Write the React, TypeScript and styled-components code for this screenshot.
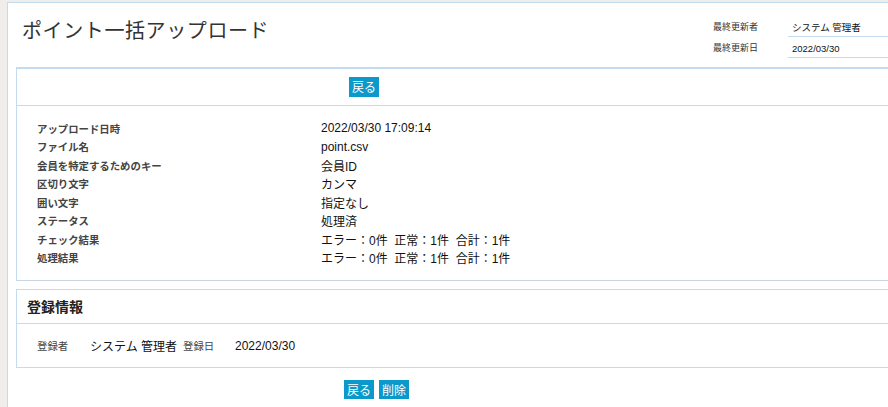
import React from 'react';
import styled, { createGlobalStyle } from 'styled-components';

const GlobalStyle = createGlobalStyle`
  html, body {
    margin: 0;
    padding: 0;
    background: #efeeea;
    overflow: hidden;
  }
  body {
    font-family: "Noto Sans CJK JP", "Liberation Sans", sans-serif;
    color: #333;
  }
`;

const jp = `"Noto Sans CJK JP", sans-serif`;
const latin = `"Liberation Sans", "Noto Sans CJK JP", sans-serif`;
const borderBlue = '#c3dbf1';

const Page = styled.div`
  padding: 2px 0 0 7px;
`;

const Panel = styled.div`
  width: 881px;
  min-height: 420px;
  background: #fff;
  border: 1px solid ${borderBlue};
  border-right: none;
  padding: 0 0 0 8px;
  box-sizing: border-box;
`;

const Header = styled.div`
  display: grid;
  grid-template-columns: 697px 1fr;
  height: 64px;
`;

const Title = styled.h1`
  margin: 0;
  padding: 13px 0 0 6px;
  font-family: ${jp};
  font-size: 20px;
  font-weight: 400;
  letter-spacing: 0.6px;
  color: #333;
  line-height: 28px;
`;

const Meta = styled.div`
  display: grid;
  grid-template-columns: 75px 1fr;
  grid-auto-rows: 21px;
  margin-top: 13px;
`;

const MetaLabel = styled.div`
  font-family: ${jp};
  font-size: 9px;
  color: #333;
  padding-top: 5px;
  line-height: 12px;
`;

const MetaValue = styled.div`
  font-family: ${latin};
  font-size: 9.5px;
  color: #111;
  padding: 6px 0 0 4px;
  line-height: 12px;
  border-bottom: 1px solid ${borderBlue};
  box-sizing: border-box;
`;

const Box = styled.section<{ $thickTop?: boolean; $bottomColor?: string }>`
  border: 1px solid ${borderBlue};
  border-top-width: ${(p) => (p.$thickTop ? 2 : 1)}px;
  border-bottom-color: ${(p) => p.$bottomColor || borderBlue};
  border-right: none;
  & + & {
    margin-top: 8px;
  }
`;

const Toolbar = styled.div<{ $indent: number }>`
  display: flex;
  gap: 5px;
  height: 37px;
  box-sizing: border-box;
  padding: 8px 0 0 ${(p) => p.$indent}px;
  border-bottom: 1px solid ${borderBlue};
`;

const Footer = styled.div<{ $indent: number }>`
  display: flex;
  gap: 5px;
  padding: 12px 0 0 ${(p) => p.$indent}px;
`;

const Button = styled.button<{ $h: number }>`
  height: ${(p) => p.$h}px;
  padding: 0 3px;
  border: none;
  border-radius: 0;
  background: #0b98ca;
  color: #fff;
  font-family: ${jp};
  font-size: 12px;
  line-height: ${(p) => p.$h}px;
  cursor: pointer;
`;

const DetailList = styled.div`
  display: grid;
  grid-template-columns: 284px 1fr;
  grid-auto-rows: 18.5px;
  align-items: center;
  padding: 13px 0 13px 20px;
`;

const Label = styled.div<{ $light?: boolean }>`
  font-family: ${jp};
  font-size: 10.4px;
  font-weight: ${(p) => (p.$light ? 400 : 700)};
  color: #444;
  white-space: nowrap;
`;

const Value = styled.div`
  font-family: ${latin};
  font-size: 12px;
  color: #111;
  white-space: pre;
`;

const BoxHeading = styled.h2`
  margin: 0;
  height: 33px;
  line-height: 33px;
  padding-left: 10px;
  font-family: ${jp};
  font-size: 14px;
  font-weight: 700;
  color: #222;
  border-bottom: 1px solid ${borderBlue};
`;

const InfoRow = styled.div`
  display: grid;
  grid-template-columns: 53px 93px 52px 1fr;
  align-items: center;
  height: 43px;
  padding-left: 20px;
`;

const details: [string, string][] = [
  ['アップロード日時', '2022/03/30 17:09:14'],
  ['ファイル名', 'point.csv'],
  ['会員を特定するためのキー', '会員ID'],
  ['区切り文字', 'カンマ'],
  ['囲い文字', '指定なし'],
  ['ステータス', '処理済'],
  ['チェック結果', 'エラー：0件  正常：1件  合計：1件'],
  ['処理結果', 'エラー：0件  正常：1件  合計：1件'],
];

const App: React.FC = () => {
  return (
    <Page>
      <GlobalStyle />
      <Panel>
        <Header>
          <Title>ポイント一括アップロード</Title>
          <Meta>
            <MetaLabel>最終更新者</MetaLabel>
            <MetaValue>システム 管理者</MetaValue>
            <MetaLabel>最終更新日</MetaLabel>
            <MetaValue>2022/03/30</MetaValue>
          </Meta>
        </Header>

        <Box $thickTop $bottomColor="#c8d5e2">
          <Toolbar $indent={332}>
            <Button $h={20}>戻る</Button>
          </Toolbar>
          <DetailList>
            {details.map(([label, value]) => (
              <React.Fragment key={label}>
                <Label>{label}</Label>
                <Value>{value}</Value>
              </React.Fragment>
            ))}
          </DetailList>
        </Box>

        <Box>
          <BoxHeading>登録情報</BoxHeading>
          <InfoRow>
            <Label $light>登録者</Label>
            <Value>システム 管理者</Value>
            <Label $light>登録日</Label>
            <Value>2022/03/30</Value>
          </InfoRow>
        </Box>

        <Footer $indent={328}>
          <Button $h={19}>戻る</Button>
          <Button $h={19}>削除</Button>
        </Footer>
      </Panel>
    </Page>
  );
};

export default App;
